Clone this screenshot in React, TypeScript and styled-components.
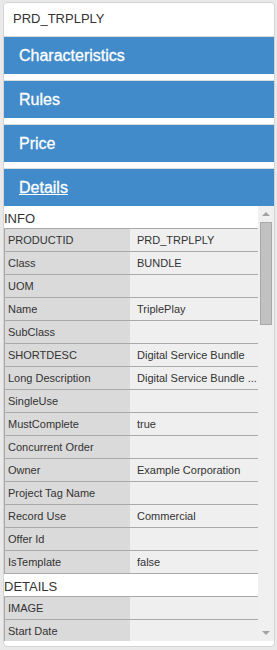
import React from 'react';
import styled, { createGlobalStyle } from 'styled-components';

const GlobalStyle = createGlobalStyle`
  html, body {
    margin: 0;
    padding: 0;
    background: #e9e9e9;
    font-family: 'Liberation Sans', Arial, sans-serif;
  }
`;

const infoRows: [string, string][] = [
  ['PRODUCTID', 'PRD_TRPLPLY'],
  ['Class', 'BUNDLE'],
  ['UOM', ''],
  ['Name', 'TriplePlay'],
  ['SubClass', ''],
  ['SHORTDESC', 'Digital Service Bundle'],
  ['Long Description', 'Digital Service Bundle ...'],
  ['SingleUse', ''],
  ['MustComplete', 'true'],
  ['Concurrent Order', ''],
  ['Owner', 'Example Corporation'],
  ['Project Tag Name', ''],
  ['Record Use', 'Commercial'],
  ['Offer Id', ''],
  ['IsTemplate', 'false'],
];

const detailRows: [string, string][] = [
  ['IMAGE', ''],
  ['Start Date', ''],
];

const sections = ['Characteristics', 'Rules', 'Price'];

const App: React.FC = () => {
  return (
    <Page>
      <GlobalStyle />
      <Card>
        <Header>PRD_TRPLPLY</Header>
        {sections.map((s) => (
          <Section key={s}>
            <Bar>{s}</Bar>
          </Section>
        ))}
        <Section>
          <Bar>
            <BarLink>Details</BarLink>
          </Bar>
        </Section>
        <Body>
          <Scroller>
            <GroupTitle>INFO</GroupTitle>
            <Table>
              {infoRows.map(([k, v]) => (
                <Row key={k}>
                  <Label>{k}</Label>
                  <Value>{v}</Value>
                </Row>
              ))}
            </Table>
            <GroupTitle>DETAILS</GroupTitle>
            <Table>
              {detailRows.map(([k, v]) => (
                <Row key={k}>
                  <Label>{k}</Label>
                  <Value>{v}</Value>
                </Row>
              ))}
            </Table>
          </Scroller>
          <ScrollBar>
            <Arrow $down={false} />
            <Track>
              <Thumb />
            </Track>
            <Arrow $down />
          </ScrollBar>
        </Body>
      </Card>
    </Page>
  );
};

export default App;

const Page = styled.div`
  padding: 2px 2px 0 3px;
  height: 650px;
  box-sizing: border-box;
`;

const Card = styled.div`
  background: #fff;
  border: 1px solid #d4d4d4;
  border-radius: 4px;
  padding-bottom: 5px;
  display: flex;
  flex-direction: column;
`;

const Header = styled.div`
  height: 33px;
  line-height: 31px;
  padding-left: 9px;
  font-size: 13px;
  color: #333;
  border-bottom: 1px solid #dcdcdc;
`;

const Section = styled.div`
  & + & {
    margin-top: 6px;
    border-top: 1px solid #dedede;
  }
`;

const Bar = styled.div`
  height: 37px;
  display: flex;
  align-items: center;
  padding-left: 15px;
  background: #428bca;
  color: #fff;
  font-size: 16px;
  -webkit-text-stroke: 0.3px #fff;
`;

const BarLink = styled.span`
  text-decoration: underline;
`;

const Body = styled.div`
  display: flex;
  height: 435px;
  background: #fff;
`;

const Scroller = styled.div`
  flex: 1;
  min-width: 0;
  overflow: hidden;
`;

const GroupTitle = styled.div`
  height: 21px;
  display: flex;
  align-items: flex-end;
  line-height: 16px;
  padding-bottom: 1px;
  font-size: 13px;
  color: #333;
  border-bottom: 1px solid #a9a9a9;
`;

const Table = styled.div`
  display: flex;
  flex-direction: column;
`;

const Row = styled.div`
  display: grid;
  grid-template-columns: 126px 1fr;
  height: 23px;
  font-size: 11px;
  color: #333;
`;

const Label = styled.div`
  background: #dadada;
  border-left: 1px solid #a9a9a9;
  border-bottom: 1px solid #a9a9a9;
  padding-left: 3px;
  line-height: 22px;
  white-space: nowrap;
`;

const Value = styled.div`
  background: #efefef;
  border-bottom: 1px solid #a9a9a9;
  padding-left: 7px;
  line-height: 22px;
  white-space: nowrap;
`;

const ScrollBar = styled.div`
  width: 16px;
  background: #f0f0f0;
  display: flex;
  flex-direction: column;
  align-items: center;
`;

const Arrow = styled.div<{ $down: boolean }>`
  width: 0;
  height: 0;
  margin: 6px 0 6px;
  border-left: 4px solid transparent;
  border-right: 4px solid transparent;
  ${(p) =>
    p.$down
      ? 'border-top: 4px solid #a3a3a3;'
      : 'border-bottom: 4px solid #a3a3a3;'}
`;

const Track = styled.div`
  flex: 1;
  width: 100%;
  display: flex;
  justify-content: center;
`;

const Thumb = styled.div`
  width: 10px;
  height: 101px;
  background: #c1c1c1;
  border: 1px solid #a8a8a8;
`;
